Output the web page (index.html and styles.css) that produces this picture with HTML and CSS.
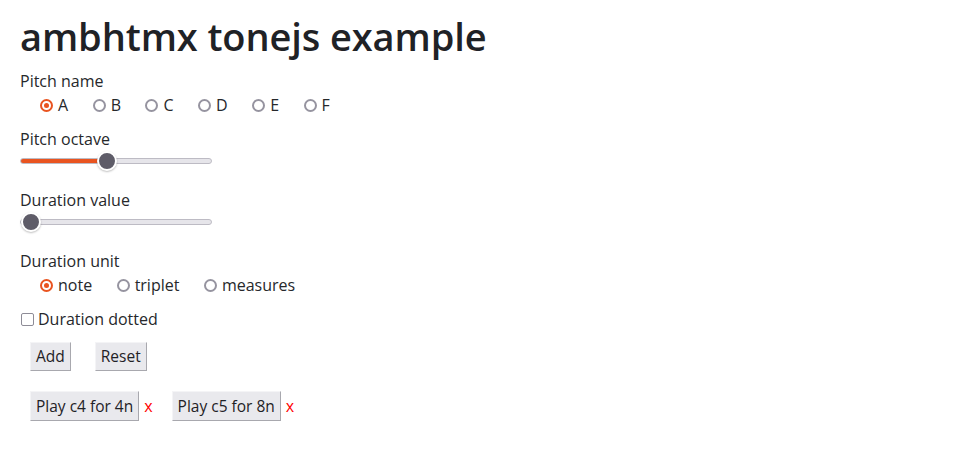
FILE: index.html
```html
<!DOCTYPE html>
<html lang="en">
<head>
<meta charset="utf-8">
<title>ambhtmx tonejs example</title>
<link rel="stylesheet" href="styles.css">
</head>
<body>
<main class="page">
  <h1 class="title">ambhtmx tonejs example</h1>
  <form class="form">
    <div class="field">
      <div class="field-label">Pitch name</div>
      <div class="choices">
        <label class="choice"><input class="radio" type="radio" name="pitch" checked><span>A</span></label>
        <label class="choice"><input class="radio" type="radio" name="pitch"><span>B</span></label>
        <label class="choice"><input class="radio" type="radio" name="pitch"><span>C</span></label>
        <label class="choice"><input class="radio" type="radio" name="pitch"><span>D</span></label>
        <label class="choice"><input class="radio" type="radio" name="pitch"><span>E</span></label>
        <label class="choice"><input class="radio" type="radio" name="pitch"><span>F</span></label>
      </div>
    </div>
    <div class="field field-range">
      <div class="field-label">Pitch octave</div>
      <input class="range" type="range" min="0" max="9" value="4" style="--fill: 44.4%">
    </div>
    <div class="field field-range">
      <div class="field-label">Duration value</div>
      <input class="range" type="range" min="1" max="16" value="1" style="--fill: 0%">
    </div>
    <div class="field">
      <div class="field-label">Duration unit</div>
      <div class="choices">
        <label class="choice"><input class="radio" type="radio" name="unit" checked><span>note</span></label>
        <label class="choice"><input class="radio" type="radio" name="unit"><span>triplet</span></label>
        <label class="choice"><input class="radio" type="radio" name="unit"><span>measures</span></label>
      </div>
    </div>
    <label class="check-row"><input class="checkbox" type="checkbox"><span>Duration dotted</span></label>
    <div class="actions">
      <button class="btn" type="button">Add</button>
      <button class="btn" type="button">Reset</button>
    </div>
  </form>
  <ul class="notes">
    <li class="note"><button class="btn" type="button">Play c4 for 4n</button><span class="remove">x</span></li>
    <li class="note"><button class="btn" type="button">Play c5 for 8n</button><span class="remove">x</span></li>
  </ul>
</main>
</body>
</html>
```

FILE: styles.css
```css
html, body {
  margin: 0;
  padding: 0;
  background: #ffffff;
}

body {
  font-family: "Open Sans", "Noto Sans", "Liberation Sans", sans-serif;
  font-size: 16px;
  color: #26282b;
}

.page {
  padding: 12px 20px 20px 20px;
}

.title {
  margin: 0;
  font-size: 38px;
  line-height: 48px;
  font-weight: 600;
  color: #1f2226;
  letter-spacing: -0.1px;
}

.form {
  display: flex;
  flex-direction: column;
  margin-top: 9px;
}

.field {
  display: flex;
  flex-direction: column;
  margin-bottom: 10px;
}

.field-range {
  margin-bottom: 19px;
}

.field-label {
  line-height: 24px;
  height: 24px;
}

.choices {
  display: flex;
  padding-left: 20px;
  height: 24px;
  align-items: center;
}

.choice {
  display: flex;
  align-items: center;
  margin-right: 24.5px;
  line-height: 24px;
}

.radio {
  -webkit-appearance: none;
  appearance: none;
  width: 13px;
  height: 13px;
  margin: 0 5px 0 0;
  border: 2px solid #9694a0;
  border-radius: 50%;
  background: #fff;
  box-sizing: border-box;
  position: relative;
  flex: none;
}

.radio:checked {
  border-color: #e95420;
}

.radio:checked::after {
  content: "";
  position: absolute;
  left: 2px;
  top: 2px;
  width: 5px;
  height: 5px;
  border-radius: 50%;
  background: #e95420;
}

.range {
  -webkit-appearance: none;
  appearance: none;
  width: 192px;
  height: 20px;
  margin: 0 0 -2px 0;
  padding: 0;
  background: transparent;
  display: block;
}

.range::-webkit-slider-runnable-track {
  height: 6px;
  border-radius: 3px;
  border: 1px solid #bdbbc4;
  box-sizing: border-box;
  background: linear-gradient(to right, #e95420 0, #e95420 var(--fill), #e6e5ea var(--fill), #e6e5ea 100%);
}

.range::-webkit-slider-thumb {
  -webkit-appearance: none;
  appearance: none;
  width: 20px;
  height: 20px;
  margin-top: -8px;
  border-radius: 50%;
  background: #5e5c68;
  border: 2px solid #ffffff;
  box-sizing: border-box;
  box-shadow: 0 1px 2px rgba(0, 0, 0, 0.25);
}

.check-row {
  display: flex;
  align-items: center;
  height: 24px;
  line-height: 24px;
  margin-bottom: 11px;
}

.checkbox {
  -webkit-appearance: none;
  appearance: none;
  width: 13px;
  height: 13px;
  margin: 0 4px 0 1px;
  border: 1.5px solid #8e8c97;
  border-radius: 2px;
  background: #fff;
  box-sizing: border-box;
  flex: none;
}

.actions {
  display: flex;
  gap: 24px;
  padding-left: 10px;
}

.btn {
  font-family: inherit;
  font-size: 15.5px;
  color: #1f2226;
  background: #e9e9ed;
  border: 1px solid;
  border-color: #f4f4f6 #a8a8ae #a8a8ae #f4f4f6;
  border-radius: 0;
  padding: 0 5px;
  height: 29px;
  line-height: 27px;
  margin: 0;
}

.notes {
  list-style: none;
  margin: 20px 0 0 0;
  padding: 0 0 0 10px;
  display: flex;
  gap: 19px;
}

.note {
  display: flex;
  align-items: center;
}

.note .btn {
  height: 30px;
}

.remove {
  color: #ff0000;
  margin-left: 5px;
}
```
